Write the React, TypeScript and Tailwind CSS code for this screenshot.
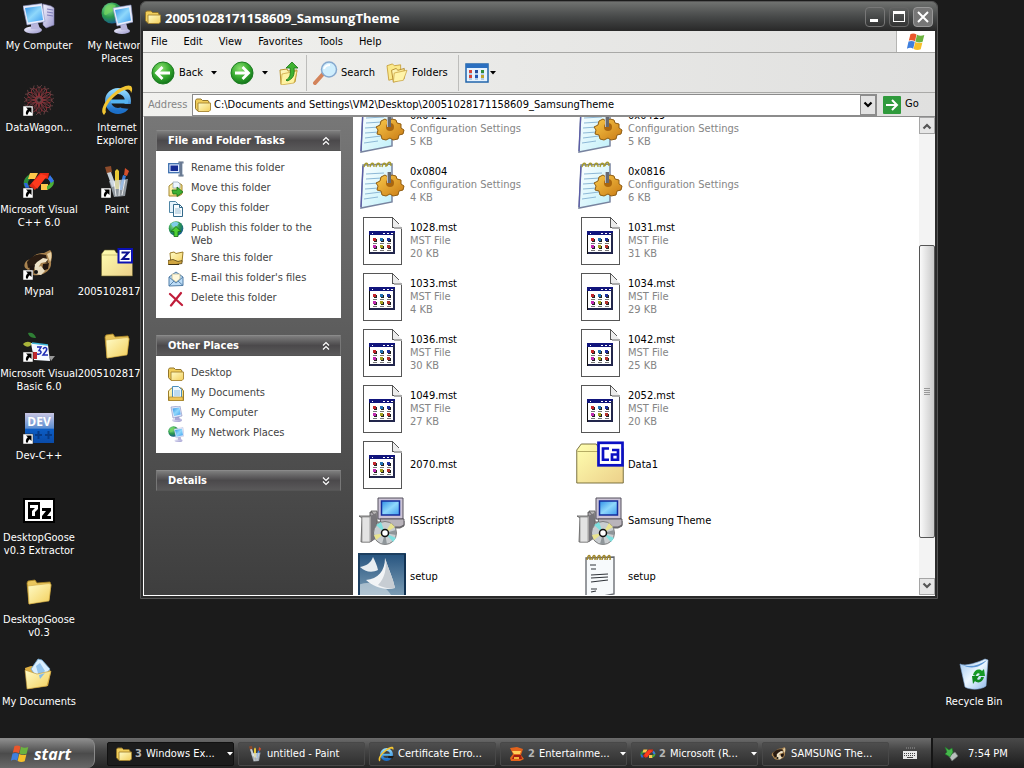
import type { ReactNode } from "react";

type IconProps = { className?: string };
type ShortcutIconProps = IconProps & { shortcut?: boolean };

/* Gradients shared by all the icons */
function SharedDefs() {
  return (
    <svg width="0" height="0" className="absolute" aria-hidden="true">
      <defs>
        <linearGradient id="screen" x1="0" y1="0" x2="1" y2="1">
          <stop offset="0" stopColor="#2f8fe6" />
          <stop offset="0.5" stopColor="#8fd8fb" />
          <stop offset="1" stopColor="#3f9df0" />
        </linearGradient>
        <linearGradient id="folder" x1="0" y1="0" x2="1" y2="1">
          <stop offset="0" stopColor="#fffcc8" />
          <stop offset="1" stopColor="#f3cf5c" />
        </linearGradient>
        <linearGradient id="box" x1="0" y1="0" x2="1" y2="1">
          <stop offset="0" stopColor="#ffffb0" />
          <stop offset="1" stopColor="#ecd08a" />
        </linearGradient>
        <linearGradient id="shell" x1="0" y1="0" x2="1" y2="1">
          <stop offset="0" stopColor="#f4f4ff" />
          <stop offset="1" stopColor="#9a97cc" />
        </linearGradient>
        <radialGradient id="green" cx="0.4" cy="0.3" r="0.7">
          <stop offset="0" stopColor="#8be070" />
          <stop offset="0.6" stopColor="#34a82e" />
          <stop offset="1" stopColor="#14761a" />
        </radialGradient>
        <radialGradient id="globe" cx="0.35" cy="0.3" r="0.8">
          <stop offset="0" stopColor="#8fe0a0" />
          <stop offset="0.5" stopColor="#2b9a4c" />
          <stop offset="1" stopColor="#124f9c" />
        </radialGradient>
        <linearGradient id="blue" x1="0" y1="0" x2="0" y2="1">
          <stop offset="0" stopColor="#8ed6fb" />
          <stop offset="1" stopColor="#1c6fc8" />
        </linearGradient>
        <linearGradient id="paper" x1="0" y1="0" x2="1" y2="1">
          <stop offset="0" stopColor="#ffffff" />
          <stop offset="1" stopColor="#bff0fa" />
        </linearGradient>
        <linearGradient id="gear" x1="0" y1="0" x2="1" y2="1">
          <stop offset="0" stopColor="#f9c94a" />
          <stop offset="1" stopColor="#c97a14" />
        </linearGradient>
        <linearGradient id="bin" x1="0" y1="0" x2="1" y2="1">
          <stop offset="0" stopColor="#9cc4ee" />
          <stop offset="0.5" stopColor="#ecf7ff" />
          <stop offset="1" stopColor="#8fb9e8" />
        </linearGradient>
        <linearGradient id="sea" x1="0" y1="0" x2="0" y2="1">
          <stop offset="0" stopColor="#24527e" />
          <stop offset="1" stopColor="#88a7bc" />
        </linearGradient>
        <linearGradient id="dev" x1="0" y1="0" x2="0" y2="1">
          <stop offset="0" stopColor="#c9c6e4" />
          <stop offset="0.5" stopColor="#5f8fd0" />
          <stop offset="0.55" stopColor="#0b5cc4" />
          <stop offset="1" stopColor="#0a4ba8" />
        </linearGradient>
      </defs>
    </svg>
  );
}

/* Small arrow badge on desktop shortcuts */
function ShortcutArrow() {
  return (
    <g>
      <rect x="0" y="22" width="10" height="10" fill="#fff" stroke="#222" strokeWidth="0.5" />
      <path d="M3 23.500h5.500V29l-1.800-1.800c-1.200.8-1.700 1.800-1.700 3.300H3c-.5-2.500.3-3.800 1.800-5.200z" fill="#000" />
    </g>
  );
}

function ComputerIcon({ className }: IconProps) {
  return (
    <svg viewBox="0 0 32 32" className={className}>
      <path d="M20 2l8 2 3 2v17l-8 3-3-3z" fill="url(#shell)" stroke="#7d7bab" strokeWidth="0.6" />
      <path d="M24 7l6 1M24 10l6 1M24 13l6 1" stroke="#7d7bb8" strokeWidth="1" />
      <ellipse cx="10" cy="28" rx="9" ry="3.500" fill="url(#shell)" />
      <path d="M8 21h7l2 6H8z" fill="#b9b6dc" />
      <path d="M0 4l19-2.500 3 18L4 23z" fill="#e9ecfb" stroke="#8b96c4" strokeWidth="0.6" />
      <path d="M2 6l16-2 2 14L5 20.500z" fill="url(#screen)" />
    </svg>
  );
}

function SmallComputerIcon() {
  return (
    <svg viewBox="0 0 16 16" className="size-4">
      <ellipse cx="9" cy="14" rx="5" ry="2" fill="url(#shell)" />
      <path d="M7 10h4l1 4H7z" fill="#a9a6d6" />
      <path d="M3 1l9-1 2 10-9 2z" fill="#e1e6f8" stroke="#7f8cc0" strokeWidth="0.6" />
      <path d="M4.500 2.500l7-1 1.200 7-6.700 1.500z" fill="url(#screen)" />
    </svg>
  );
}

function NetworkIcon({ className }: IconProps) {
  return (
    <svg viewBox="0 0 32 32" className={className}>
      <circle cx="11" cy="11" r="10.500" fill="url(#globe)" />
      <path d="M4 6c4-5 9-4 11-2-3 2-2 5-5 6s-5 5-7 2z" fill="#71d35c" opacity="0.8" />
      <ellipse cx="21" cy="29" rx="8" ry="3" fill="url(#shell)" />
      <path d="M19 21h6l2 7h-7z" fill="#b9b6dc" />
      <path d="M12 6l18-3 2 17-16 4z" fill="#e9ecfb" stroke="#8b96c4" strokeWidth="0.6" />
      <path d="M14 8l14-2.500 2 13-13 3z" fill="url(#screen)" />
    </svg>
  );
}

function WebIcon({ className }: IconProps) {
  return (
    <svg viewBox="0 0 32 32" className={className}>
      <circle cx="17" cy="17" r="10" fill="none" stroke="url(#blue)" strokeWidth="6" />
      <path d="M10 15.500h17v4H10z" fill="#55b4f0" />
      <path d="M21 20h11l-3 5-9-1z" fill="#1b1b1b" />
      <path d="M3 31c-5-4 1-15 10-22C21 2 30-1 31 4c.5 2-.5 4-1 5 0-4-4-5-12 0C9 15 3 24 5 28z" fill="#f2c532" />
    </svg>
  );
}

function FolderIcon({ className }: IconProps) {
  return (
    <svg viewBox="0 0 32 32" className={className}>
      <path d="M4 7l1-2 7-1 2 3 13-1 1 3-2 15L6 28z" fill="#e9c65c" stroke="#a88424" strokeWidth="0.8" />
      <path d="M5 10l21-2.500 2 1L26 25 6 28z" fill="url(#folder)" stroke="#cfa843" strokeWidth="0.6" />
    </svg>
  );
}

function SmallFolderIcon({ className }: IconProps) {
  return (
    <svg viewBox="0 0 16 16" className={className}>
      <path d="M.5 3.500l1-1.500h4.500l1.500 1.500h5.500l1 1.500v8.500H2l-1.500-2z" fill="#f0cd5b" stroke="#93762a" />
      <path d="M3 6h12.500v7L14 14.500H3z" fill="url(#folder)" stroke="#a58330" strokeWidth="0.9" />
    </svg>
  );
}

function DocumentsIcon({ className }: IconProps) {
  return (
    <svg viewBox="0 0 32 32" className={className}>
      <path d="M2 10l6-2 18 3 2 3-3 14-20 3z" fill="#dfb044" />
      <path d="M8 11l7-10 4 1 8 9-10 13z" fill="#d9efff" stroke="#6fa4cf" strokeWidth="0.8" />
      <path d="M13 8l4-3 5 8-6 6z" fill="#93c4ee" />
      <path d="M2 12l12 4 14-3-4 15-20 3z" fill="url(#folder)" stroke="#bd9435" strokeWidth="0.6" />
      <path d="M16 17l6-2-5 6z" fill="#86bbe8" />
    </svg>
  );
}

function ZipBoxIcon({ className, children }: IconProps & { children?: ReactNode }) {
  return (
    <svg viewBox="0 0 32 32" className={className}>
      <path d="M.5 6l3-4h10l2 3h16v23H.5z" fill="url(#box)" stroke="#6d6431" strokeWidth="0.6" />
      <path d="M1 7h17" stroke="#9d934c" strokeWidth="0.5" />
      {children}
    </svg>
  );
}

function ArchiveIcon({ className }: IconProps) {
  return (
    <ZipBoxIcon className={className}>
      <rect x="17.500" y="1" width="13.500" height="13.500" fill="#fff" stroke="#0b10b4" strokeWidth="2" />
      <path d="M20.500 4.500h7L21.500 11h7" fill="none" stroke="#0b1090" strokeWidth="2" />
    </ZipBoxIcon>
  );
}

function CabIcon({ className }: IconProps) {
  return (
    <ZipBoxIcon className={className}>
      <rect x="15" y="1.200" width="16" height="15" fill="#fff" stroke="#0b10c4" strokeWidth="1.800" />
      <path d="M22 5h-4v7.500h4M24 6h4v6.500h-4V9h4" fill="none" stroke="#0b10c4" strokeWidth="1.800" />
    </ZipBoxIcon>
  );
}

function DataWagonIcon({ className }: IconProps) {
  return (
    <svg viewBox="0 0 32 32" className={className}>
      <g fill="none" stroke="#8f3038" strokeWidth="0.8">
        {[0, 30, 60, 90, 120, 150, 180, 210, 240, 270, 300, 330].map((angle) => (
          <g key={angle} transform={`rotate(${angle} 16 16)`}>
            <ellipse cx="16" cy="8" rx="3" ry="5" />
            <path d="M14 1l2 3 3-3M16 4v9l3 3" stroke="#6a4244" />
          </g>
        ))}
        <circle cx="16" cy="16" r="4" />
      </g>
      <ShortcutArrow />
    </svg>
  );
}

function VisualCppIcon({ className, shortcut = true }: ShortcutIconProps) {
  return (
    <svg viewBox="0 0 32 32" className={className}>
      <path d="M7 8C0 12-1 18 3 23l3-3c-2-3-1-6 3-8z" fill="#2c8e3c" />
      <path d="M1 17h3l3 6H3z" fill="#2b65df" />
      <path d="M7 7h8l-3 6H5z" fill="#ffc84a" />
      <path d="M17 7h9l-1 6-5-1-8 12-6-4z" fill="#e32a15" />
      <path d="M9 17l9-9 6 2-10 13z" fill="#ff3b1e" />
      <path d="M18 18h7v6h-7z" fill="#ffc84a" />
      <path d="M27 10c6 4 5 11-3 14v-4c4-2 4-4 1-7z" fill="#4caf38" />
      <path d="M27 9l4 6-3 2-3-4z" fill="#3472ef" />
      {shortcut && <ShortcutArrow />}
    </svg>
  );
}

function PaintIcon({ className, shortcut = true }: ShortcutIconProps) {
  return (
    <svg viewBox="0 0 32 32" className={className}>
      <path d="M4 1l6-1 1 6-5 2z" fill="#8c4b2b" />
      <path d="M6 7l4-1 5 14-4 1z" fill="#c8cfd6" />
      <path d="M14 5l2-2 2 2v18h-4z" fill="#e9c936" />
      <path d="M24 2l4 3-2 5-3-1z" fill="#d5502c" />
      <path d="M22 9l3 1-4 14h-3z" fill="#3d7fd8" />
      <path d="M8 15l19-2-3 17-11 1z" fill="#cfdce6" opacity="0.65" />
      <path d="M13 15l2 15M19 14l-1 16M24 14l-3 15" stroke="#fff" strokeWidth="0.8" />
      {shortcut && <ShortcutArrow />}
    </svg>
  );
}

function RaccoonIcon({ className, shortcut = true }: ShortcutIconProps) {
  return (
    <svg viewBox="0 0 32 32" className={className}>
      <path d="M2 15c2-4 5-3 7-5 4-5 9-5 12-5l6-3c3 2 2 8 1 12 1 7-5 12-12 13-7 1-11-1-12-6-3-1-3-4-2-6z" fill="#a9834f" />
      <path d="M4 14c5-7 12-9 19-7l2 8-7-2-7 5-6 2z" fill="#2a1c12" />
      <path d="M24 6l4-2c1 4 0 8-1 10z" fill="#e8d3a8" />
      <path d="M14 14l6-4 5 1-2 3-5 1-3 5-7 1z" fill="#efe3c8" />
      <path d="M20 16l6-1-1 6-6 2z" fill="#20150f" />
      <path d="M6 18l6-1-1 5-4 1z" fill="#20150f" />
      <path d="M12 20l6-2 4 5-4 4-6-1z" fill="#e9dcc0" />
      <circle cx="13" cy="24" r="2" fill="#111" />
      {shortcut && <ShortcutArrow />}
    </svg>
  );
}

function VisualBasicIcon({ className }: IconProps) {
  return (
    <svg viewBox="0 0 32 32" className={className}>
      <path d="M5 3c4-1 7 1 8 5-4 0-7-1-8-5z" fill="#2f7f35" />
      <path d="M0 14c3-3 7-3 9 0-2 3-6 4-9 0z" fill="#a9b53a" />
      <path d="M8 13l17 2 2 16-16-1z" fill="#f4f8ff" />
      <path d="M9 13l16 2" stroke="#3eb5d6" strokeWidth="1.500" />
      <path d="M14 17h4l-2 3.500c3 0 3 4.500-2 3.500M20 19c2-3 5-1 3 2l-3 4h5" fill="none" stroke="#1c2bb4" strokeWidth="1.500" />
      <path d="M10 22h4v7h-4z" fill="#c1272d" />
      <path d="M26 26h6l-4 5z" fill="#999" />
      <ShortcutArrow />
    </svg>
  );
}

function DevIcon({ className }: IconProps) {
  return (
    <svg viewBox="0 0 32 32" className={className}>
      <rect x="2" y="1" width="29" height="30" fill="url(#dev)" />
      <text x="16" y="14" textAnchor="middle" fontSize="12" fontWeight="bold" fontFamily="Open Sans" fill="#fff">DEV</text>
      <path d="M12 23h7M15.500 19v8M22 23h7M25.500 19v8" stroke="#073a86" strokeWidth="2" />
      <ShortcutArrow />
    </svg>
  );
}

function SevenZipIcon({ className }: IconProps) {
  return (
    <svg viewBox="0 0 32 32" className={className}>
      <rect x="0" y="4" width="32" height="25" fill="#000" />
      <rect x="2" y="6" width="28" height="21" fill="#fff" />
      <rect x="5" y="8" width="12" height="17" fill="#000" />
      <path d="M7 11h8v4l-3 3v4H9v-5l3-3H7z" fill="#fff" />
      <path d="M19 14h9v3l-4 5h4v3h-9v-3l4-5h-4z" fill="#000" />
    </svg>
  );
}

function RecycleIcon({ className }: IconProps) {
  return (
    <svg viewBox="0 0 32 32" className={className}>
      <path d="M2 6c5 3 19-2 25-5l3 1-2 26c-5 4-16 4-21 1z" fill="url(#bin)" stroke="#87aede" strokeWidth="0.6" />
      <path d="M3 6c7 4 17 2 26-4-7 8-17 10-26 4z" fill="#5d96d4" />
      <path d="M15 17c1-5 6-7 9-4l2-2 1 7h-7l2-2c-2-2-4 0-4 2z" fill="#159a27" />
      <path d="M26 19c-1 5-6 7-9 4l-2 3-1-8h7l-2 3c2 2 4 0 4-2z" fill="#0f8a20" />
    </svg>
  );
}

function FlagIcon({ className }: IconProps) {
  return (
    <svg viewBox="0 0 20 18" className={className}>
      <path d="M4.500 1c2.500-1 4.500-.5 6 .5L9 8.200C7 7.200 5 7 2.800 7.800z" fill="#e9572c" />
      <path d="M11 1.800c2.500 1.300 4.800 1.200 7.300.2l-1.700 6.700c-2.300 1-4.700 1-7.200-.3z" fill="#6cb33f" />
      <path d="M2.500 8.500c2.200-.8 4.300-.7 6.300.3l-1.600 6.900c-2-1.200-4.200-1-6.300 0z" fill="#3f7fdd" />
      <path d="M9.200 9.100c2.300 1.200 4.800 1.200 7.200.3l-1.700 6.900c-2.300 1-4.900.9-7.100-.3z" fill="#f6bf2a" />
    </svg>
  );
}

function ArrowDisc({ back }: { back?: boolean }) {
  return (
    <svg viewBox="0 0 24 24" className="size-6 shrink-0">
      <circle cx="12" cy="12" r="11" fill="url(#green)" stroke="#1d7d22" />
      <path
        d={back ? "M19 12H6M11.500 6L5.500 12l6 6" : "M5 12h13M12.500 6l6 6-6 6"}
        fill="none"
        stroke="#fff"
        strokeWidth="2.800"
      />
    </svg>
  );
}

function UpFolderIcon() {
  return (
    <svg viewBox="0 0 24 24" className="size-6">
      <path d="M2 9l7-1 1 2 9-1-2 12-14 2z" fill="url(#folder)" stroke="#b9942f" />
      <path d="M4 13l15-3-3 12-13 2z" fill="#fff3a2" stroke="#c7a23c" strokeWidth="0.7" />
      <path d="M8 19c4-2 5-6 4-12H8l6-6 6 6h-4c1 7-1 11-7 13z" fill="#3fb231" stroke="#177515" strokeWidth="0.8" />
    </svg>
  );
}

function SearchIcon() {
  return (
    <svg viewBox="0 0 26 24" className="h-6 w-[26px]">
      <path d="M3 22l8-9" stroke="#d3835a" strokeWidth="4" strokeLinecap="round" />
      <circle cx="17" cy="8.500" r="7.500" fill="#cfeefd" stroke="#86a9cf" strokeWidth="1.500" />
      <path d="M12 8c1-3 3-4 6-4" fill="none" stroke="#fff" strokeWidth="2" />
    </svg>
  );
}

function FoldersIcon() {
  return (
    <svg viewBox="0 0 24 22" className="h-5 w-[22px]">
      <path d="M1 3l6-2 2 2 7-1v13L3 19z" fill="#fbe98b" stroke="#c8a13d" />
      <path d="M6 8l5-2 2 2 7-2v11L8 21z" fill="url(#folder)" stroke="#b38a2b" />
      <path d="M9 11l14-3-4 11-11 2z" fill="#fff4a9" stroke="#c8a13d" strokeWidth="0.8" />
    </svg>
  );
}

function ViewsIcon() {
  return (
    <svg viewBox="0 0 24 20" className="h-5 w-6">
      <rect x="1" y="1" width="22" height="18" fill="#e6f3ff" stroke="#2265ab" strokeWidth="1.500" />
      <rect x="1" y="1" width="22" height="4" fill="#2a6fc0" />
      {[4, 10, 16].map((x, i) => (
        <g key={x}>
          <rect x={x} y="7" width="3" height="3" fill={["#d6453a", "#274e9e", "#2f8b3b"][i]} />
          <rect x={x} y="12" width="3" height="3" fill={["#d6453a", "#2456b5", "#c1a42b"][i]} />
          <path d={i === 0 ? "M4 11h3M4 16h3" : i === 1 ? "M10 11h3M10 16h3" : "M16 11h3M16 16h3"} stroke="#7fa8cf" />
        </g>
      ))}
    </svg>
  );
}

function Chevron({ className }: IconProps) {
  return (
    <svg viewBox="0 0 10 8" className={className}>
      <path d="M1.500 1.500L5 5l3.500-3.500" fill="none" stroke="currentColor" strokeWidth="2.200" />
    </svg>
  );
}

function Caret({ className }: IconProps) {
  return (
    <svg viewBox="0 0 6 4" className={className}>
      <path d="M0 0h6L3 3.500z" fill="currentColor" />
    </svg>
  );
}

/* Task pane icons */
function RenameIcon() {
  return (
    <svg viewBox="0 0 16 16" className="size-4">
      <rect x="0.700" y="2.700" width="11" height="9" fill="#dfe9ff" stroke="#3c6fae" strokeWidth="1.300" />
      <rect x="2.500" y="4.500" width="7.500" height="5.500" fill="#152b92" />
      <path d="M10.500 1.500h5M10.500 14.500h5" stroke="#56667e" strokeWidth="2" />
      <path d="M13 1v14" stroke="#8fa2bb" strokeWidth="3" />
      <path d="M13 1v14" stroke="#44536a" strokeWidth="1" />
    </svg>
  );
}

function MoveIcon() {
  return (
    <svg viewBox="0 0 16 16" className="size-4">
      <path d="M1 5l4-3h6l3 2v9l-3 2H1z" fill="url(#folder)" stroke="#a58832" />
      <path d="M5 1h5l2 2v4H5z" fill="#eef6ff" stroke="#8a9db5" strokeWidth="0.7" />
      <path d="M4 9h5V6l6 5-6 4.500V13H5z" fill="#3eb034" stroke="#176f17" strokeWidth="0.8" />
    </svg>
  );
}

function CopyIcon() {
  return (
    <svg viewBox="0 0 16 16" className="size-4">
      <path d="M1.500.5h6l2 2v9h-8z" fill="#e5f2fb" stroke="#4f86a6" />
      <path d="M5.500 3.500h6l3 3v9h-9z" fill="#f7fcff" stroke="#33698a" />
      <path d="M7 8h5M7 10h6M7 12h6" stroke="#9bbdd2" />
      <path d="M11.500 3.500v3h3" fill="none" stroke="#33698a" />
    </svg>
  );
}

function PublishIcon() {
  return (
    <svg viewBox="0 0 16 16" className="size-4">
      <circle cx="8" cy="7.500" r="7.300" fill="url(#globe)" />
      <path d="M3 3c3-3 6-2 8-1L9 5 5 6z" fill="#7fcce8" />
      <path d="M8 5.500l5 5h-3v5H6v-5H3z" fill="#4fd034" stroke="#156a14" strokeWidth="0.8" />
    </svg>
  );
}

function ShareIcon() {
  return (
    <svg viewBox="0 0 16 16" className="size-4">
      <path d="M2 2l4-1 2 1.500 7-1.500-1 10-11 2z" fill="url(#folder)" stroke="#9c7d28" />
      <path d="M0 9.500l5-1 5 2 4-1v3l-6 1H0z" fill="#d0a540" stroke="#5c4716" strokeWidth="0.8" />
      <path d="M1 13.500h10" stroke="#3f3012" />
    </svg>
  );
}

function EmailIcon() {
  return (
    <svg viewBox="0 0 16 16" className="size-4">
      <path d="M1 6l7-5 7 5v8.500L1 15z" fill="#bcdcf6" stroke="#517da6" />
      <path d="M4 3h8v5l-4 3-4-3z" fill="#fff8dc" stroke="#a9a27c" strokeWidth="0.6" />
      <path d="M1 6l7 6 7-6M1 15l5-5M15 14.500L10 10" fill="none" stroke="#517da6" strokeWidth="0.9" />
    </svg>
  );
}

function DeleteIcon() {
  return (
    <svg viewBox="0 0 16 16" className="size-4">
      <path d="M2 3l12 11M13 2L3 14.500" stroke="#c01d3a" strokeWidth="2.200" strokeLinecap="round" />
    </svg>
  );
}

function SmallDocumentsIcon() {
  return (
    <svg viewBox="0 0 16 16" className="size-4">
      <path d="M.5 5l3-3h10l2 3v9.500H.5z" fill="url(#folder)" stroke="#9c7d28" />
      <path d="M4.500.5h6l3 3v8h-9z" fill="#eef8ff" stroke="#4b8ebd" />
      <path d="M6 5h6M6 7h6M6 9h6" stroke="#8dbde0" />
      <path d="M1 11h14v3.500H1z" fill="#efc557" stroke="#9c7d28" strokeWidth="0.6" />
    </svg>
  );
}

/* File list icons, 48px */
function ConfigFileIcon() {
  return (
    <svg viewBox="0 0 48 48" className="size-12">
      <path d="M5 4l29-1v38L3 47z" fill="url(#paper)" stroke="#77839f" strokeWidth="1.500" />
      <path d="M5 5L3 46" stroke="#5a5ba8" strokeWidth="1.200" />
      <path d="M8 13l18-1M8 18l16-1M7 23l14-1M7 28l14-1M7 33l16-2M6 38l14-2" stroke="#8db8d6" strokeWidth="1" />
      <path d="M6 6c1-5 4-5 4 0M12 6c1-5 4-5 4 0M18 6c1-5 4-5 4 0M24 6c1-5 4-5 4 0M29 5c1-5 4-5 4 0" fill="none" stroke="#a79a2c" strokeWidth="1.300" />
      <path
        d="M23 16l4-2 3 2 4-2 4 1 1 3 4 1v4l3 2-1 4-4 1-1 4-5 1-3-2-4 2-4-1-1-4-4-1 1-4-2-3 4-2z"
        fill="url(#gear)"
        stroke="#8f5c10"
        strokeWidth="1"
      />
      <circle cx="32" cy="22" r="4" fill="#a9660f" />
      <path d="M29 11h4v11h-4z" fill="#666a72" />
      <path d="M29 11h1v11h-1z" fill="#b8bcc4" />
    </svg>
  );
}

function MstFileIcon() {
  const dots = ["#c4262c", "#2272b4", "#1d2f9c", "#c02ab0", "#a4a120", "#b5312c"];
  return (
    <svg viewBox="0 0 48 48" className="size-12" shapeRendering="crispEdges">
      <path d="M5.500.5H34.500l9 10v37h-38z" fill="#fff" stroke="#565656" />
      <path d="M34.500.5v10h9" fill="#ececec" stroke="#565656" />
      <path d="M36 11h8" stroke="#aaa" strokeWidth="2" />
      <rect x="11.500" y="14.500" width="25" height="22" fill="#fff" stroke="#111" />
      <rect x="11" y="14" width="26" height="4" fill="#11157c" />
      <path d="M14 16h1M25 16h2M29 16h2M33 16h2" stroke="#fff" />
      <path d="M36 16v20H12" fill="none" stroke="#22264c" strokeWidth="2" />
      {dots.map((color, i) => (
        <g key={color}>
          <rect x={16 + (i % 3) * 7} y={i < 3 ? 22 : 29} width="3" height="3" fill="#222" />
          <rect x={15 + (i % 3) * 7} y={i < 3 ? 21 : 28} width="3" height="3" fill={color} />
          <rect x={15 + (i % 3) * 7} y={i < 3 ? 26 : 33} width="4" height="1" fill="#777" />
        </g>
      ))}
    </svg>
  );
}

function InstallerIcon() {
  return (
    <svg viewBox="0 0 48 48" className="size-12">
      <path d="M12 15h7v10l27-1v5l-4 2H20v8h-8z" fill="#a7a3a8" stroke="#444" strokeWidth="0.8" />
      <path d="M1 19h16l-4-5H19l-1 27-6 4H3l1-24z" fill="#b9b7b7" stroke="#555" strokeWidth="0.8" />
      <path d="M4 20h8v25H4z" fill="#e3e3e3" stroke="#777" strokeWidth="0.6" />
      <path d="M13 19l5-3v25l-5 4z" fill="#77757a" />
      <path d="M20 1h25v21H20z" fill="#ccc4d6" stroke="#55505c" />
      <rect x="23.500" y="4" width="18" height="14" fill="url(#screen)" stroke="#152d9c" strokeWidth="1.500" />
      <path d="M22 22h24v6l-4 2H24z" fill="#b9b4bb" stroke="#4a474e" strokeWidth="0.8" />
      <circle cx="27" cy="36" r="11.500" fill="#c9cdd0" stroke="#666" strokeWidth="0.8" />
      <path d="M27 36L18 28l5-3zM27 36l8 9 3-4z" fill="#7fe0df" />
      <path d="M27 36l-11 2 2 5zM27 36l6-10 4 4z" fill="#e9e48f" />
      <path d="M27 36l-3 11 5 .5zM27 36l11-3v5z" fill="#8f969a" />
      <circle cx="27" cy="36" r="3.500" fill="#fff" stroke="#111" strokeWidth="1.500" />
    </svg>
  );
}

function SailsIcon() {
  return (
    <svg viewBox="0 0 48 48" className="size-12">
      <rect width="48" height="48" fill="url(#sea)" />
      <path d="M0 32c16-6 30 0 36 16H0z" fill="#d5dfe6" opacity="0.6" />
      <path d="M15 4c2 4 4 8 5 13-6 3-13 2-18-3 6-1 11-4 13-10z" fill="#e8edf1" />
      <path d="M27 5c3 10 8 20 10 30C27 38 16 34 8 27c12-1 19-9 19-22z" fill="#f2f4f6" />
      <path d="M27 5c2 10 0 20-7 27 6 3 12 4 17 3-2-10-7-20-10-30z" fill="#c7cdd3" />
      <path d="M1 48V1h46" fill="none" stroke="#1d3f60" strokeWidth="2" />
      <path d="M47 1v47" stroke="#123252" strokeWidth="2" />
    </svg>
  );
}

function NotepadIcon() {
  return (
    <svg viewBox="0 0 48 48" className="size-12">
      <path d="M10 5l28-1v37L10 46z" fill="#f7fafc" stroke="#62666c" strokeWidth="1.300" />
      <path d="M11 7c1-6 4-6 3 0M16 7c1-6 4-6 3 0M21 7c1-6 4-6 3 0M26 7c1-6 4-6 3 0M31 7c1-6 4-6 3 0" fill="none" stroke="#a3892c" strokeWidth="1.500" />
      <path d="M14 12h6M15 16h5M15 22l17-1M15 25l17-1M15 29l17-2M15 36h6M15 39l5-1" stroke="#30343a" strokeWidth="1.200" />
    </svg>
  );
}

/* Taskbar icons */
function EntertainmentIcon({ className }: IconProps) {
  return (
    <svg viewBox="0 0 16 16" className={className}>
      <path d="M1 2l7-1 6 2-2 6 3 4-4 2H2l-1-3 3-4z" fill="#e2631c" />
      <path d="M3 5h9l-1 3H5z" fill="#ffd05a" />
      <path d="M5 9h7l1 4H3z" fill="#a31d12" />
      <path d="M5 11h5v2H5z" fill="#f7b13c" />
    </svg>
  );
}

function KeyboardIcon() {
  return (
    <svg viewBox="0 0 14 14" className="size-[14px]">
      <path d="M3 2h9" fill="none" stroke="#999" strokeDasharray="1 1" />
      <rect x="0" y="5" width="14" height="8" fill="#e8e8e8" />
      <path d="M1 7.500h12M1 9.500h12" stroke="#444" strokeDasharray="1 1" />
      <path d="M4 11.500h6" stroke="#444" />
    </svg>
  );
}

function TrayDeviceIcon() {
  return (
    <svg viewBox="0 0 16 16" className="size-4">
      <path d="M6 10l6-4 3 4-6 5z" fill="#b9c0bd" stroke="#6a716e" strokeWidth="0.7" />
      <path d="M2 1l4 3 3-2 1 4-3 5-5-3 2-2z" fill="#46b74b" stroke="#1e7a2a" strokeWidth="0.6" />
    </svg>
  );
}

const desktopColumns = [
  [
    { label: "My Computer", icon: ComputerIcon },
    { label: "DataWagon...", icon: DataWagonIcon },
    { label: "Microsoft Visual C++ 6.0", icon: VisualCppIcon },
    { label: "Mypal", icon: RaccoonIcon },
    { label: "Microsoft Visual Basic 6.0", icon: VisualBasicIcon },
    { label: "Dev-C++", icon: DevIcon },
    { label: "DesktopGoose v0.3 Extractor", icon: SevenZipIcon },
    { label: "DesktopGoose v0.3", icon: FolderIcon },
    { label: "My Documents", icon: DocumentsIcon },
  ],
  [
    { label: "My Network Places", icon: NetworkIcon },
    { label: "Internet Explorer", icon: WebIcon },
    { label: "Paint", icon: PaintIcon },
    { label: "20051028171...", icon: ArchiveIcon },
    { label: "20051028171...", icon: FolderIcon },
  ],
];

const menus = ["File", "Edit", "View", "Favorites", "Tools", "Help"];

const folderTasks = [
  { label: "Rename this folder", icon: <RenameIcon /> },
  { label: "Move this folder", icon: <MoveIcon /> },
  { label: "Copy this folder", icon: <CopyIcon /> },
  { label: "Publish this folder to the Web", icon: <PublishIcon /> },
  { label: "Share this folder", icon: <ShareIcon /> },
  { label: "E-mail this folder's files", icon: <EmailIcon /> },
  { label: "Delete this folder", icon: <DeleteIcon /> },
];

const otherPlaces = [
  { label: "Desktop", icon: <SmallFolderIcon className="size-4" /> },
  { label: "My Documents", icon: <SmallDocumentsIcon /> },
  { label: "My Computer", icon: <SmallComputerIcon /> },
  { label: "My Network Places", icon: <NetworkIcon className="size-4" /> },
];

const config = "Configuration Settings";
const mst = "MST File";

const files = [
  { name: "0x0412", type: config, size: "5 KB", icon: <ConfigFileIcon /> },
  { name: "0x0419", type: config, size: "5 KB", icon: <ConfigFileIcon /> },
  { name: "0x0804", type: config, size: "4 KB", icon: <ConfigFileIcon /> },
  { name: "0x0816", type: config, size: "6 KB", icon: <ConfigFileIcon /> },
  { name: "1028.mst", type: mst, size: "20 KB", icon: <MstFileIcon /> },
  { name: "1031.mst", type: mst, size: "31 KB", icon: <MstFileIcon /> },
  { name: "1033.mst", type: mst, size: "4 KB", icon: <MstFileIcon /> },
  { name: "1034.mst", type: mst, size: "29 KB", icon: <MstFileIcon /> },
  { name: "1036.mst", type: mst, size: "30 KB", icon: <MstFileIcon /> },
  { name: "1042.mst", type: mst, size: "25 KB", icon: <MstFileIcon /> },
  { name: "1049.mst", type: mst, size: "27 KB", icon: <MstFileIcon /> },
  { name: "2052.mst", type: mst, size: "20 KB", icon: <MstFileIcon /> },
  { name: "2070.mst", icon: <MstFileIcon /> },
  { name: "Data1", icon: <CabIcon className="size-12" /> },
  { name: "ISScript8", icon: <InstallerIcon /> },
  { name: "Samsung Theme", icon: <InstallerIcon /> },
  { name: "setup", icon: <SailsIcon /> },
  { name: "setup", icon: <NotepadIcon /> },
];

const tasks = [
  { label: "Windows Ex...", count: 3, active: true, icon: <SmallFolderIcon className="size-4" /> },
  { label: "untitled - Paint", icon: <PaintIcon className="size-4" shortcut={false} /> },
  { label: "Certificate Erro...", icon: <WebIcon className="size-4" /> },
  { label: "Entertainme...", count: 2, icon: <EntertainmentIcon className="size-4" /> },
  { label: "Microsoft (R...", count: 2, icon: <VisualCppIcon className="size-4" shortcut={false} /> },
  { label: "SAMSUNG The...", icon: <RaccoonIcon className="size-4" shortcut={false} /> },
];

function DesktopIcon({ label, icon: Icon }: { label: string; icon: (props: IconProps) => ReactNode }) {
  return (
    <button className="flex h-[82px] w-[78px] shrink-0 flex-col items-center pt-0.5 text-white">
      <Icon className="size-8" />
      <span className="mt-[5px] text-center leading-[13px]">{label}</span>
    </button>
  );
}

function TitleBar() {
  return (
    <header className="flex h-[29px] shrink-0 items-center gap-1 bg-linear-to-b from-[#707270] via-[#484a4a] to-[#282828] px-1">
      <SmallFolderIcon className="size-4" />
      <h1 className="flex-1 pt-0.5 font-['Open_Sans',sans-serif] text-[13px] font-bold leading-4 text-white">
        20051028171158609_SamsungTheme
      </h1>
      <div className="flex gap-1 text-white">
        <button aria-label="Minimize" className="flex size-5 items-end rounded-sm border border-[#777] p-1">
          <span className="h-[3px] w-2 bg-white" />
        </button>
        <button aria-label="Maximize" className="flex size-5 items-center justify-center rounded-sm border border-[#666]">
          <span className="h-[11px] w-3 border border-t-3 border-white" />
        </button>
        <button aria-label="Close" className="flex size-5 items-center justify-center rounded-sm border border-[#999] bg-[#767676]">
          <svg viewBox="0 0 12 12" className="size-3">
            <path d="M1 1l10 10M11 1L1 11" stroke="currentColor" strokeWidth="2" />
          </svg>
        </button>
      </div>
    </header>
  );
}

function Toolbar() {
  return (
    <div className="flex h-10 shrink-0 items-center border-b border-[#a9a9a7] pt-px pl-2">
      <button className="flex items-center gap-1">
        <ArrowDisc back />
        Back
      </button>
      <button aria-label="Back history" className="ml-2">
        <Caret className="h-1 w-1.5" />
      </button>
      <button aria-label="Forward" className="ml-[13px]">
        <ArrowDisc />
      </button>
      <button aria-label="Forward history" className="ml-2">
        <Caret className="h-1 w-1.5" />
      </button>
      <button aria-label="Up" className="ml-2.5">
        <UpFolderIcon />
      </button>
      <span className="ml-1 h-9 w-px bg-[#bdbdbb]" />
      <button className="ml-[5px] flex items-center gap-[3px]">
        <SearchIcon />
        Search
      </button>
      <button className="ml-[11px] flex items-center gap-1">
        <FoldersIcon />
        Folders
      </button>
      <span className="ml-2.5 h-9 w-px bg-[#bdbdbb]" />
      <button aria-label="Views" className="ml-1.5 flex items-center gap-px">
        <ViewsIcon />
        <Caret className="h-1 w-1.5" />
      </button>
    </div>
  );
}

function AddressBar() {
  return (
    <div className="flex h-[23px] shrink-0 items-center pl-[5px]">
      <label htmlFor="address" className="w-11 pt-px text-[#858585]">
        Address
      </label>
      <div className="flex h-[22px] flex-1 items-center border border-[#8c8c8c] bg-white pl-0.5">
        <SmallFolderIcon className="size-4" />
        <input
          id="address"
          className="ml-[3px] min-w-0 flex-1 pt-0.5 outline-none"
          defaultValue="C:\Documents and Settings\VM2\Desktop\20051028171158609_SamsungTheme"
        />
        <button aria-label="Address history" className="flex h-5 w-4 items-center justify-center border border-[#8c8c8c] bg-[#e2e2e2]">
          <Chevron className="h-2 w-2.5" />
        </button>
      </div>
      <button className="flex w-[58px] items-center gap-1 pl-1.5">
        <svg viewBox="0 0 18 18" className="size-[18px]">
          <rect width="18" height="18" rx="1" fill="#2f9a3c" />
          <path d="M3 9h10M9 4l5 5-5 5" fill="none" stroke="#fff" strokeWidth="2" />
        </svg>
        Go
      </button>
    </div>
  );
}

type PanelProps = { title: string; items?: { label: string; icon: ReactNode }[] };

function Panel({ title, items }: PanelProps) {
  return (
    <section>
      <button className="flex h-[21px] w-full items-center justify-between border border-t-[#8a8a8a] border-r-[#777] border-b-[#555] border-l-[#777] bg-linear-to-b from-[#7e7e7e] via-[#4b494b] via-50% to-[#5a595a] pt-0.5 pr-2.5 pl-[11px] font-bold text-white">
        {title}
        <svg viewBox="0 0 8 10" className="mb-0.5 h-2.5 w-2">
          <path
            d={items ? "M1 4.500l3-3 3 3M1 8.500l3-3 3 3" : "M1 1.500l3 3 3-3M1 5.500l3 3 3-3"}
            fill="none"
            stroke="currentColor"
            strokeWidth="1.200"
          />
        </svg>
      </button>
      {items && (
        <ul className="flex flex-col gap-1 bg-white px-3 pt-2.5 pb-[11px]">
          {items.map((item) => (
            <li key={item.label}>
              <a href="#" className="flex items-start gap-[7px] leading-[13px] text-[#444]">
                <span className="h-4 shrink-0">{item.icon}</span>
                <span>{item.label}</span>
              </a>
            </li>
          ))}
        </ul>
      )}
    </section>
  );
}

function FileList() {
  return (
    <ul className="-mt-4 grid flex-1 auto-rows-[56px] grid-cols-[218px_218px] content-start pl-[5px]">
      {files.map((file, i) => (
        <li key={i} className="flex items-center gap-1 leading-[13px]">
          {file.icon}
          <div className="pb-0.5">
            <p>{file.name}</p>
            {file.type && <p className="text-[#858585]">{file.type}</p>}
            {file.size && <p className="text-[#858585]">{file.size}</p>}
          </div>
        </li>
      ))}
    </ul>
  );
}

function ScrollBar() {
  return (
    <div className="flex w-4 shrink-0 flex-col bg-[#f3f3f3] text-[#555]">
      <button aria-label="Scroll up" className="flex h-[17px] items-center justify-center border border-[#a5a5a5] bg-[#e6e6e6]">
        <Chevron className="h-2 w-2.5 rotate-180" />
      </button>
      <div className="grow-[113]" />
      <div className="flex grow-[288] flex-col items-center justify-center gap-px rounded-xs border border-[#555] bg-linear-to-r from-[#fafafa] to-[#c9c9c9]">
        <span className="h-px w-1.5 bg-[#999]" />
        <span className="h-px w-1.5 bg-[#999]" />
        <span className="h-px w-1.5 bg-[#999]" />
        <span className="h-px w-1.5 bg-[#999]" />
      </div>
      <div className="grow-[41]" />
      <button aria-label="Scroll down" className="flex h-[17px] items-center justify-center border border-[#a5a5a5] bg-[#e6e6e6]">
        <Chevron className="h-2 w-2.5" />
      </button>
    </div>
  );
}

function ExplorerWindow() {
  return (
    <main className="absolute top-px right-[86px] bottom-[139px] left-[140px] flex flex-col overflow-hidden rounded-t-md border border-[#555] bg-[#2a2a2a]">
      <TitleBar />
      <div className="mx-0.5 mb-0.5 flex min-h-0 flex-1 flex-col bg-linear-to-r from-[#f1f1ee] to-[#e0e0df] text-black">
        <nav className="flex h-[22px] shrink-0 border-b border-[#a9a9a7]">
          <div className="flex flex-1 items-center gap-4 pt-px pl-2">
            {menus.map((menu) => (
              <button key={menu}>{menu}</button>
            ))}
          </div>
          <div className="flex w-[39px] items-center justify-center border-l border-[#b5b5b3] bg-white">
            <FlagIcon className="h-[18px] w-5" />
          </div>
        </nav>
        <Toolbar />
        <AddressBar />
        <div className="flex min-h-0 flex-1 overflow-hidden border-t border-b border-l border-t-[#8c8c8c] border-b-white border-l-white bg-white">
          <aside className="flex w-[209px] shrink-0 flex-col gap-[17px] bg-linear-to-b from-[#777] to-[#3e3e3e] px-3 pt-[13px]">
            <Panel title="File and Folder Tasks" items={folderTasks} />
            <Panel title="Other Places" items={otherPlaces} />
            <Panel title="Details" />
          </aside>
          <FileList />
          <ScrollBar />
        </div>
      </div>
    </main>
  );
}

function Taskbar() {
  return (
    <footer className="flex h-[30px] shrink-0 bg-linear-to-b from-[#6c6c6c] via-[#454545] via-40% to-[#252525] text-white">
      <button className="flex w-[95px] shrink-0 items-center gap-1 rounded-r-lg border-t border-r border-[#8a8a8a] bg-linear-to-b from-[#8d8d8d] via-[#4b4b4b] via-50% to-[#686868] pl-2.5">
        <FlagIcon className="h-[18px] w-5" />
        <span className="font-['Open_Sans',sans-serif] text-base leading-5 font-bold italic">start</span>
      </button>
      <nav className="ml-3 flex min-w-0 flex-1 gap-1 pt-1 pb-0.5">
        {tasks.map((task) => (
          <a
            key={task.label}
            href="#"
            className={
              task.active
                ? "flex w-[127px] items-center rounded-xs border border-[#111] bg-[#1c1c1c] pl-2 whitespace-nowrap"
                : "flex w-[127px] items-center rounded-xs border border-[#484848] bg-linear-to-b from-[#4e4e4e] to-[#303030] pl-2 whitespace-nowrap"
            }
          >
            {task.icon}
            {task.count && <span className="ml-[3px] font-bold text-[#b5b5b5]">{task.count}</span>}
            <span className="ml-1 flex-1">{task.label}</span>
            {task.count && <Caret className="h-1 w-1.5" />}
          </a>
        ))}
      </nav>
      <button aria-label="Keyboard layout" className="mr-3.5">
        <KeyboardIcon />
      </button>
      <div className="flex w-[93px] shrink-0 items-center gap-[9px] border-l-2 border-[#151515] bg-linear-to-b from-[#4a4a4a] to-[#1c1c1c] pt-0.5 pl-2.5">
        <TrayDeviceIcon />
        <time>7:54 PM</time>
      </div>
    </footer>
  );
}

export default function App() {
  return (
    <div className="flex h-screen flex-col overflow-hidden bg-[#1b1b1b] font-['DejaVu_Sans_Condensed','DejaVu_Sans',sans-serif] text-[11px]">
      <SharedDefs />
      <div className="relative flex min-h-0 flex-1">
        {desktopColumns.map((column, i) => (
          <div key={i} className="flex flex-col">
            {column.map((item, j) => (
              <DesktopIcon key={j} {...item} />
            ))}
          </div>
        ))}
        <div className="absolute right-[11px] bottom-0">
          <DesktopIcon label="Recycle Bin" icon={RecycleIcon} />
        </div>
        <ExplorerWindow />
      </div>
      <Taskbar />
    </div>
  );
}
